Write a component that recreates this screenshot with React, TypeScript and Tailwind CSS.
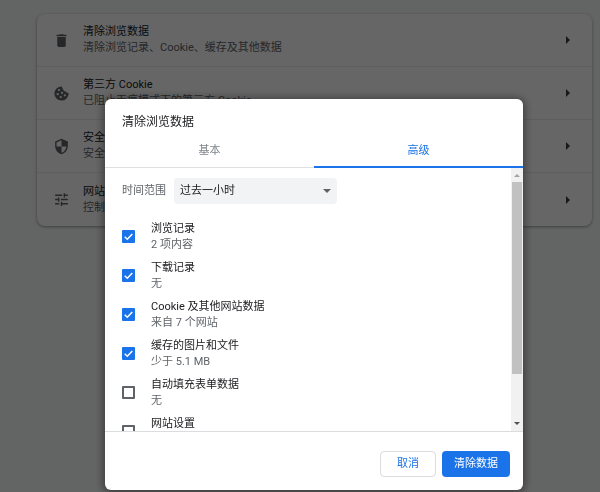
import type { ReactNode } from 'react';
import { MdDelete, MdSecurity, MdTune } from 'react-icons/md';

function CookieIcon({ className }: { className?: string }) {
  return (
    <svg viewBox="0 0 24 24" fill="currentColor" fillRule="evenodd" className={className}>
      <path d="M12 2a10 10 0 1 0 10 10.3c0-.5-.1-1-.3-1.4-1.9.5-3.2-.5-3.4-1.9-2.5.3-4.4-1.3-4-3.6-1.4-.7-1.7-1.8-1.4-3.3-.3-.1-.6-.1-.9-.1zM8.5 5.6a1.6 1.6 0 1 1 0 3.2a1.6 1.6 0 1 1 0-3.2zM12.7 9.4a1.6 1.6 0 1 1 0 3.2a1.6 1.6 0 1 1 0-3.2zM6.7 11.4a1.6 1.6 0 1 1 0 3.2a1.6 1.6 0 1 1 0-3.2zM11 15.4a1.6 1.6 0 1 1 0 3.2a1.6 1.6 0 1 1 0-3.2zM16.7 13a1.6 1.6 0 1 1 0 3.2a1.6 1.6 0 1 1 0-3.2z" />
    </svg>
  );
}

const settings = [
  { icon: MdDelete, title: '清除浏览数据', description: '清除浏览记录、Cookie、缓存及其他数据' },
  { icon: CookieIcon, title: '第三方 Cookie', description: '已阻止无痕模式下的第三方 Cookie' },
  { icon: MdSecurity, title: '安全', description: '安全浏览和其他安全设置' },
  { icon: MdTune, title: '网站设置', description: '控制网站可以使用和显示什么信息' },
];

const dataTypes = [
  { id: 'history', title: '浏览记录', detail: '2 项内容', checked: true },
  { id: 'downloads', title: '下载记录', detail: '无', checked: true },
  { id: 'cookies', title: 'Cookie 及其他网站数据', detail: '来自 7 个网站', checked: true },
  { id: 'cache', title: '缓存的图片和文件', detail: '少于 5.1 MB', checked: true },
  { id: 'autofill', title: '自动填充表单数据', detail: '无', checked: false },
  { id: 'site-settings', title: '网站设置', detail: '无', checked: false },
];

function SettingsCard() {
  return (
    <section className="divide-y divide-[#e8eaed] rounded-lg bg-white shadow-[0_1px_3px_0_rgba(60,64,67,0.5)]">
      {settings.map(({ icon: Icon, title, description }) => (
        <button key={title} type="button" className="flex h-[53px] w-full items-center pr-5 pl-4 text-left">
          <Icon className="size-[17px] shrink-0 text-[#5f6368]" />
          <span className="ml-[13px] min-w-0 flex-1 leading-4">
            <span className="block truncate text-[#202124]">{title}</span>
            <span className="block truncate text-[#5f6368]">{description}</span>
          </span>
          <svg viewBox="0 0 4 8" className="mr-0.5 h-2 w-1 fill-[#3c4043]">
            <path d="M0 0l4 4-4 4z" />
          </svg>
        </button>
      ))}
    </section>
  );
}

function CheckRow({ id, title, detail, checked }: (typeof dataTypes)[number]) {
  return (
    <label htmlFor={id} className="flex h-[39px] items-center">
      <span className="grid size-[13px] shrink-0">
        <input
          id={id}
          type="checkbox"
          defaultChecked={checked}
          className="peer col-start-1 row-start-1 size-[13px] appearance-none rounded-[1px] border-2 border-[#5f6368] checked:border-[#1a73e8] checked:bg-[#1a73e8]"
        />
        <svg
          viewBox="0 0 13 13"
          className="pointer-events-none col-start-1 row-start-1 hidden size-[13px] fill-none stroke-white peer-checked:block"
        >
          <path d="M2.7 6.8l2.6 2.5 5-5.3" strokeWidth="1.5" />
        </svg>
      </span>
      <span className="ml-4 leading-4">
        <span className="block text-[#202124]">{title}</span>
        <span className="block text-[#5f6368]">{detail}</span>
      </span>
    </label>
  );
}

function Tab({ active, children }: { active?: boolean; children: ReactNode }) {
  return (
    <button
      type="button"
      role="tab"
      aria-selected={!!active}
      className={
        active
          ? 'h-full flex-1 border-b-2 border-[#1a73e8] text-[#1a73e8]'
          : 'h-full flex-1 border-b border-[#e0e0e0] text-[#80868b]'
      }
    >
      {children}
    </button>
  );
}

function Scrollbar() {
  return (
    <div aria-hidden="true" className="flex w-3 flex-col items-center bg-[#f1f1f1]">
      <svg viewBox="0 0 12 14" className="h-3.5 w-3 fill-[#a3a3a3]">
        <path d="M3 9l3-3 3 3z" />
      </svg>
      <div className="w-2.5 flex-9 bg-[#c1c1c1]" />
      <div className="flex-2" />
      <svg viewBox="0 0 12 14" className="h-3.5 w-3 fill-[#505050]">
        <path d="M3 5l3 3 3-3z" />
      </svg>
    </div>
  );
}

function ClearDataDialog() {
  return (
    <div
      role="dialog"
      aria-modal="true"
      aria-labelledby="dialog-title"
      className="w-full max-w-[418px] overflow-hidden rounded-md bg-white shadow-[0_1px_8px_2px_rgba(0,0,0,0.4)]"
    >
      <h2 id="dialog-title" className="px-[17px] pt-[13px] text-xs leading-5 text-[#202124]">
        清除浏览数据
      </h2>
      <div role="tablist" className="mt-1 flex h-8">
        <Tab>基本</Tab>
        <Tab active>高级</Tab>
      </div>
      <div className="flex h-[263px]">
        <div className="min-w-0 flex-1 overflow-y-auto px-[17px] pt-2.5 [scrollbar-width:none]">
          <div className="mb-[13px] flex items-center">
            <label htmlFor="range" className="text-[#5f6368]">
              时间范围
            </label>
            <div className="ml-2 grid w-[163px] items-center">
              <select
                id="range"
                className="col-start-1 row-start-1 h-[26px] appearance-none rounded-sm bg-[#f1f3f4] pl-1.5 text-[#202124]"
              >
                <option>过去一小时</option>
                <option>过去 24 小时</option>
                <option>过去 7 天</option>
                <option>时间不限</option>
              </select>
              <svg
                viewBox="0 0 8 4"
                className="pointer-events-none col-start-1 row-start-1 mr-1.5 h-1 w-2 justify-self-end fill-[#5f6368]"
              >
                <path d="M0 0h8L4 4z" />
              </svg>
            </div>
          </div>
          {dataTypes.map((item) => (
            <CheckRow key={item.id} {...item} />
          ))}
        </div>
        <Scrollbar />
      </div>
      <div className="flex justify-end gap-1.5 border-t border-[#dadce0] px-[13px] pt-[19px] pb-[13px]">
        <button type="button" className="h-[26px] rounded-sm border border-[#dadce0] px-4 text-[#1a73e8]">
          取消
        </button>
        <button type="button" className="h-[26px] rounded-sm bg-[#1a73e8] px-3 text-white">
          清除数据
        </button>
      </div>
    </div>
  );
}

export default function App() {
  return (
    <div className="min-h-screen bg-[#f8f9fa] font-[Roboto,'Noto_Sans_CJK_SC',sans-serif] text-[11px]">
      <main className="pt-3.5 pr-2 pl-[37px]">
        <SettingsCard />
      </main>
      <div className="fixed inset-0 flex items-end justify-center bg-black/60 pb-0.5 pl-7">
        <ClearDataDialog />
      </div>
    </div>
  );
}
